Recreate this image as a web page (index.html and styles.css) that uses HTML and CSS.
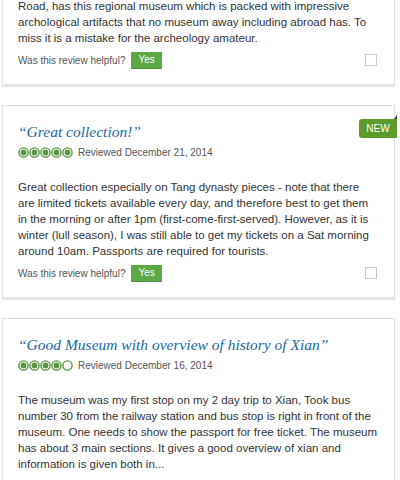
FILE: index.html
```html
<!DOCTYPE html>
<html>
<head>
<meta charset="utf-8">
<link rel="stylesheet" href="styles.css">
</head>
<body>
<div class="list">
  <div class="card cut">
    <p class="body">Road, has this regional museum which is packed with impressive archological artifacts that no museum away including abroad has. To miss it is a mistake for the archeology amateur.</p>
    <div class="helpful">
      <span class="label">Was this review helpful?</span>
      <span class="yes">Yes</span>
      <span class="check"></span>
    </div>
  </div>

  <div class="card">
    <span class="new">NEW</span>
    <h2 class="title">“Great collection!”</h2>
    <div class="rating">
      <svg class="bubbles" width="56" height="11" viewBox="0 0 56 11">
        <g fill="none" stroke="#589442" stroke-width="1.4">
          <circle cx="5.5" cy="5.5" r="4.6"/><circle cx="16.5" cy="5.5" r="4.6"/><circle cx="27.5" cy="5.5" r="4.6"/><circle cx="38.5" cy="5.5" r="4.6"/><circle cx="49.5" cy="5.5" r="4.6"/>
        </g>
        <g fill="#589442">
          <circle cx="5.5" cy="5.5" r="2.9"/><circle cx="16.5" cy="5.5" r="2.9"/><circle cx="27.5" cy="5.5" r="2.9"/><circle cx="38.5" cy="5.5" r="2.9"/><circle cx="49.5" cy="5.5" r="2.9"/>
        </g>
      </svg>
      <span class="date">Reviewed December 21, 2014</span>
    </div>
    <p class="body">Great collection especially on Tang dynasty pieces - note that there are limited tickets available every day, and therefore best to get them in the morning or after 1pm (first-come-first-served). However, as it is winter (lull season), I was still able to get my tickets on a Sat morning around 10am. Passports are required for tourists.</p>
    <div class="helpful">
      <span class="label">Was this review helpful?</span>
      <span class="yes">Yes</span>
      <span class="check"></span>
    </div>
  </div>

  <div class="card">
    <h2 class="title">“Good Museum with overview of history of Xian”</h2>
    <div class="rating">
      <svg class="bubbles" width="56" height="11" viewBox="0 0 56 11">
        <g fill="none" stroke="#589442" stroke-width="1.4">
          <circle cx="5.5" cy="5.5" r="4.6"/><circle cx="16.5" cy="5.5" r="4.6"/><circle cx="27.5" cy="5.5" r="4.6"/><circle cx="38.5" cy="5.5" r="4.6"/><circle cx="49.5" cy="5.5" r="4.6"/>
        </g>
        <g fill="#589442">
          <circle cx="5.5" cy="5.5" r="2.9"/><circle cx="16.5" cy="5.5" r="2.9"/><circle cx="27.5" cy="5.5" r="2.9"/><circle cx="38.5" cy="5.5" r="2.9"/>
        </g>
      </svg>
      <span class="date">Reviewed December 16, 2014</span>
    </div>
    <p class="body">The museum was my first stop on my 2 day trip to Xian, Took bus number 30 from the railway station and bus stop is right in front of the museum. One needs to show the passport for free ticket. The museum has about 3 main sections. It gives a good overview of xian and information is given both in...</p>
    <a class="more">More <span class="caret">▼</span></a>
  </div>
</div>
</body>
</html>
```

FILE: styles.css
```css
html, body {
  margin: 0;
  padding: 0;
  background: #ffffff;
  overflow: hidden;
}
body {
  width: 400px;
  height: 480px;
  font-family: "Liberation Sans", Arial, sans-serif;
  color: #333333;
}
.list {
  display: flex;
  flex-direction: column;
  gap: 20px;
  padding: 0 5px 0 2px;
}
.card {
  position: relative;
  border: 1px solid #e2e2e2;
  box-shadow: 0 2px 1px #e6e6e6;
  padding: 16px 17px 16px 15px;
  background: #fff;
}
.card.cut {
  border-top: none;
  padding-top: 0;
  margin-top: -2px;
}
.title {
  margin: 0;
  font-family: Georgia, "Liberation Serif", "DejaVu Serif", serif;
  font-style: italic;
  font-weight: normal;
  font-size: 15.5px;
  line-height: 20px;
  color: #22679a;
}
.rating {
  display: flex;
  align-items: center;
  gap: 4px;
  margin-top: 3px;
  height: 14px;
}
.bubbles {
  display: block;
}
.date {
  font-size: 10px;
  color: #555;
}
.body {
  margin: 20px 0 0 0;
  font-size: 11.5px;
  line-height: 16px;
  color: #333;
}
.card.cut .body {
  margin-top: 0;
}
.helpful {
  display: flex;
  align-items: center;
  margin-top: 6px;
  height: 16px;
}
.label {
  font-size: 10px;
  color: #555;
}
.yes {
  margin-left: 6px;
  background: #5ba846;
  color: #fff;
  font-size: 10px;
  line-height: 16px;
  padding: 0 7px;
  border-radius: 1px;
  border-bottom: 1px solid #4a8c37;
}
.check {
  margin-left: auto;
  width: 10px;
  height: 10px;
  border: 1px solid #c8c8c8;
  margin-right: 0;
}
.new {
  position: absolute;
  right: -3px;
  top: 13px;
  width: 38px;
  height: 19px;
  background: #5a9b2c;
  color: #fff;
  font-size: 10px;
  line-height: 19px;
  text-align: center;
  border-radius: 3px 0 0 3px;
}
.new::before {
  content: "";
  position: absolute;
  right: 0;
  top: -4px;
  border-left: 3px solid transparent;
  border-bottom: 4px solid #333;
}
.more {
  display: block;
  margin-top: 6px;
  font-size: 10px;
  line-height: 14px;
  color: #22679a;
}
.caret {
  font-size: 7px;
}
```
